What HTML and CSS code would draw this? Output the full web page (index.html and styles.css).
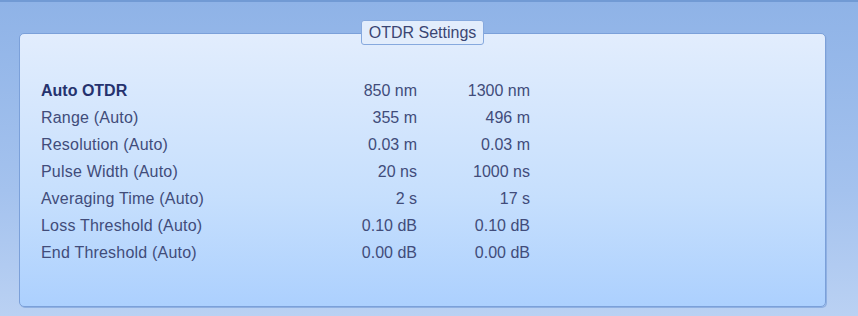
FILE: index.html
```html
<!DOCTYPE html>
<html>
<head>
<meta charset="utf-8">
<link rel="stylesheet" href="styles.css">
</head>
<body>
<div class="screen">
  <div class="group">
    <div class="legend">OTDR Settings</div>
    <div class="grid">
      <div class="label bold">Auto OTDR</div><div class="val">850 nm</div><div class="val">1300 nm</div>
      <div class="label">Range (Auto)</div><div class="val">355 m</div><div class="val">496 m</div>
      <div class="label">Resolution (Auto)</div><div class="val">0.03 m</div><div class="val">0.03 m</div>
      <div class="label">Pulse Width (Auto)</div><div class="val">20 ns</div><div class="val">1000 ns</div>
      <div class="label">Averaging Time (Auto)</div><div class="val">2 s</div><div class="val">17 s</div>
      <div class="label">Loss Threshold (Auto)</div><div class="val">0.10 dB</div><div class="val">0.10 dB</div>
      <div class="label">End Threshold (Auto)</div><div class="val">0.00 dB</div><div class="val">0.00 dB</div>
    </div>
  </div>
</div>
</body>
</html>
```
FILE: styles.css
```css
html, body {
  margin: 0;
  padding: 0;
}
body {
  font-family: "Liberation Sans", Arial, sans-serif;
  font-size: 16px;
  color: #414c7a;
}
.screen {
  width: 858px;
  height: 316px;
  box-sizing: border-box;
  border-top: 2px solid #719ad4;
  background: linear-gradient(to bottom, #8fb3e7 0%, #a4c2ee 60%, #bad1f3 100%);
  padding: 31px 0 0 19px;
}
.group {
  position: relative;
  width: 807px;
  height: 274px;
  box-sizing: border-box;
  border: 1px solid #7ba0d9;
  border-radius: 5px;
  box-shadow: 1px 1px 0 #8fb0e2;
  background: linear-gradient(to bottom, #e2edfd 0%, #c6dffd 60%, #acd0fe 100%);
  padding: 44px 0 0 21px;
}
.legend {
  position: absolute;
  left: 341px;
  top: -14px;
  width: 123px;
  height: 25px;
  box-sizing: border-box;
  border: 1px solid #86a9de;
  border-radius: 3px;
  background: #e2edfc;
  color: #3a4673;
  text-align: center;
  line-height: 23px;
}
.grid {
  display: grid;
  grid-template-columns: 259px 117px 113px;
  grid-auto-rows: 26.9px;
  align-items: center;
}
.label {
  white-space: nowrap;
  letter-spacing: 0.2px;
}
.bold {
  font-weight: bold;
  color: #25326e;
  letter-spacing: 0;
}
.val {
  text-align: right;
  white-space: nowrap;
}
```
